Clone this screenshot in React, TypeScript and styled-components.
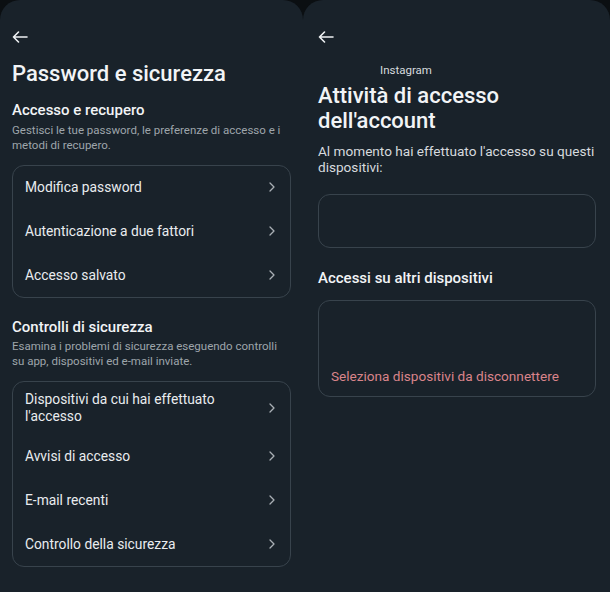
import React from "react";
import styled, { createGlobalStyle } from "styled-components";

const GlobalStyle = createGlobalStyle`
  html, body {
    margin: 0;
    padding: 0;
    background: #0b0f12;
  }
  body {
    font-family: Roboto, "Noto Sans", sans-serif;
    color: #eef1f3;
  }
`;

const Page = styled.div`
  width: 610px;
  height: 592px;
  display: flex;
  overflow: hidden;
  background: #0b0f12;
`;

const Panel = styled.div<{ $width: number; $padLeft: number; $padRight: number }>`
  width: ${(p) => p.$width}px;
  flex-shrink: 0;
  box-sizing: border-box;
  padding: 29px ${(p) => p.$padRight}px 0 ${(p) => p.$padLeft}px;
  background: #19222a;
  border-radius: 20px 20px 0 0;
  display: flex;
  flex-direction: column;
`;

const BackButton = styled.div`
  width: 16px;
  height: 16px;
  display: flex;
  align-items: center;
`;

const Title = styled.h1<{ $top: number }>`
  margin: ${(p) => p.$top}px 0 0;
  font-size: 22px;
  line-height: 25px;
  font-weight: 500;
  color: #f2f4f6;
`;

const SectionTitle = styled.h2<{ $top: number }>`
  margin: ${(p) => p.$top}px 0 0;
  font-size: 15px;
  line-height: 20px;
  font-weight: 500;
  color: #f2f4f6;
`;

const Hint = styled.p<{ $top: number }>`
  margin: ${(p) => p.$top}px 0 0;
  font-size: 11.5px;
  line-height: 14.5px;
  color: #9ea5ab;
`;

const Body = styled.p`
  margin: 10px 0 0;
  font-size: 13.6px;
  line-height: 16px;
  color: #d6dade;
`;

const AppLabel = styled.div`
  margin: 18px 0 0 62px;
  font-size: 11.5px;
  line-height: 14px;
  color: #d6dade;
`;

const Card = styled.div<{ $top: number; $height?: number }>`
  margin-top: ${(p) => p.$top}px;
  border: 1px solid #38434c;
  border-radius: 12px;
  box-sizing: border-box;
  ${(p) => (p.$height ? `height: ${p.$height}px;` : "")}
  display: flex;
  flex-direction: column;
  justify-content: flex-end;
`;

const Row = styled.div<{ $tall?: boolean }>`
  height: ${(p) => (p.$tall ? 53 : 44)}px;
  display: flex;
  align-items: center;
  justify-content: space-between;
  padding: 0 15px 0 12px;
  font-size: 13.8px;
  line-height: 17px;
  color: #e9ecef;
  &:first-child {
    margin-top: -1px;
  }
`;

const RowText = styled.span`
  max-width: 215px;
`;

const DangerLink = styled.span`
  padding: 0 0 12px 12px;
  font-size: 13.6px;
  line-height: 16px;
  color: #d9848a;
`;

const Arrow = () => (
  <svg width="16" height="12" viewBox="0 0 16 12" fill="none">
    <path d="M15 6H1.5M6.5 1L1.5 6l5 5" stroke="#eef1f3" strokeWidth="1.6" strokeLinecap="round" strokeLinejoin="round" />
  </svg>
);

const Chevron = () => (
  <svg width="6" height="10" viewBox="0 0 6 10" fill="none">
    <path d="M1 1l4 4-4 4" stroke="#a9afb5" strokeWidth="1.3" strokeLinecap="round" strokeLinejoin="round" />
  </svg>
);

const Item = ({ label, tall }: { label: React.ReactNode; tall?: boolean }) => (
  <Row $tall={tall}>
    <RowText>{label}</RowText>
    <Chevron />
  </Row>
);

export default function App() {
  return (
    <>
      <GlobalStyle />
      <Page>
        <Panel $width={303} $padLeft={12} $padRight={12}>
          <BackButton>
            <Arrow />
          </BackButton>
          <Title $top={16}>Password e sicurezza</Title>
          <SectionTitle $top={14}>Accesso e recupero</SectionTitle>
          <Hint $top={3}>
            Gestisci le tue password, le preferenze di accesso e i
            <br />
            metodi di recupero.
          </Hint>
          <Card $top={13}>
            <Item label="Modifica password" />
            <Item label="Autenticazione a due fattori" />
            <Item label="Accesso salvato" />
          </Card>
          <SectionTitle $top={19}>Controlli di sicurezza</SectionTitle>
          <Hint $top={2}>
            Esamina i problemi di sicurezza eseguendo controlli
            <br />
            su app, dispositivi ed e-mail inviate.
          </Hint>
          <Card $top={13}>
            <Item tall label="Dispositivi da cui hai effettuato l'accesso" />
            <Item label="Avvisi di accesso" />
            <Item label="E-mail recenti" />
            <Item label="Controllo della sicurezza" />
          </Card>
        </Panel>
        <Panel $width={307} $padLeft={15} $padRight={14}>
          <BackButton>
            <Arrow />
          </BackButton>
          <AppLabel>Instagram</AppLabel>
          <Title $top={6}>
            Attività di accesso
            <br />
            dell'account
          </Title>
          <Body>
            Al momento hai effettuato l'accesso su questi
            <br />
            dispositivi:
          </Body>
          <Card $top={19} $height={54} />
          <SectionTitle $top={20}>Accessi su altri dispositivi</SectionTitle>
          <Card $top={12} $height={97}>
            <DangerLink>Seleziona dispositivi da disconnettere</DangerLink>
          </Card>
        </Panel>
      </Page>
    </>
  );
}
